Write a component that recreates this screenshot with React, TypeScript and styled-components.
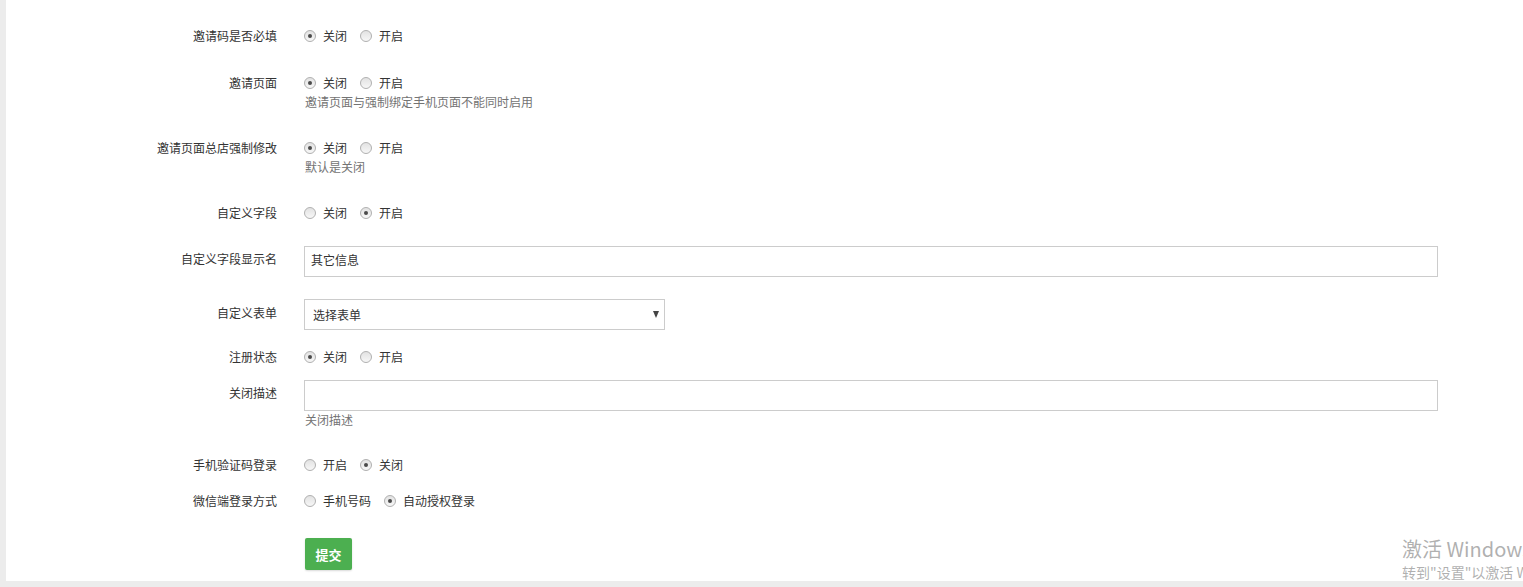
import React from "react";
import styled, { createGlobalStyle } from "styled-components";

const Global = createGlobalStyle`
  html, body { margin: 0; padding: 0; overflow: hidden; }
  body {
    background: #ececec;
    font-family: "Noto Sans CJK SC", "Noto Sans", "Liberation Sans", sans-serif;
    font-size: 12px;
    color: #333;
  }
  * { box-sizing: border-box; }
`;

const Panel = styled.div`
  position: relative;
  margin-left: 6px;
  width: 1517px;
  height: 581px;
  background: #fff;
  padding-top: 26px;
  overflow: hidden;
`;

const Row = styled.div<{ $mt?: number }>`
  display: grid;
  grid-template-columns: 271px 1134px;
  column-gap: 27px;
  margin-top: ${(p) => p.$mt ?? 0}px;
`;

const Label = styled.div<{ $pt?: number }>`
  text-align: right;
  line-height: 20px;
  padding-top: ${(p) => p.$pt ?? 0}px;
  color: #333;
  white-space: nowrap;
`;

const Control = styled.div`
  display: flex;
  flex-direction: column;
  align-items: flex-start;
`;

const RadioGroup = styled.div`
  display: flex;
  align-items: center;
  height: 20px;
  gap: 13px;
`;

const RadioOption = styled.label`
  display: flex;
  align-items: center;
  gap: 7px;
  line-height: 20px;
  color: #333;
`;

const RadioDot = styled.span<{ $on?: boolean }>`
  position: relative;
  width: 12px;
  height: 12px;
  border-radius: 50%;
  border: 1px solid #b0b0b0;
  background: linear-gradient(#e2e2e2, #f7f7f7);
  &::after {
    content: "";
    display: ${(p) => (p.$on ? "block" : "none")};
    position: absolute;
    left: 3px;
    top: 3px;
    width: 4px;
    height: 4px;
    border-radius: 50%;
    background: #4a4a4a;
  }
`;

const Help = styled.div`
  line-height: 17px;
  color: #737373;
  padding-left: 1px;
`;

const TextInput = styled.input`
  width: 1134px;
  height: 31px;
  border: 1px solid #ccc;
  border-radius: 0;
  padding: 0 6px 4px;
  font: inherit;
  font-size: 12px;
  color: #333;
  outline: none;
  background: #fff;
`;

const SelectWrap = styled.div`
  position: relative;
  width: 361px;
  height: 31px;
`;

const Select = styled.select`
  width: 100%;
  height: 100%;
  appearance: none;
  -webkit-appearance: none;
  border: 1px solid #ccc;
  border-radius: 0;
  background: #fff;
  padding: 0 8px 1px;
  font: inherit;
  font-size: 12px;
  color: #333;
  outline: none;
`;

const Arrow = styled.span`
  position: absolute;
  right: 6px;
  top: 12px;
  width: 0;
  height: 0;
  border-left: 3.5px solid transparent;
  border-right: 3.5px solid transparent;
  border-top: 7px solid #444;
  pointer-events: none;
`;

const Button = styled.button`
  margin-left: 1px;
  width: 47px;
  height: 32px;
  border: none;
  border-radius: 2px;
  background: #4caf50;
  color: #fff;
  font: inherit;
  font-size: 13px;
  font-weight: bold;
  box-shadow: 0 1px 2px rgba(0, 0, 0, 0.15);
  cursor: pointer;
`;

const Watermark = styled.div`
  position: absolute;
  left: 1396px;
  top: 536px;
  white-space: nowrap;
  color: rgba(150, 150, 150, 0.75);
  pointer-events: none;
`;

const WmTitle = styled.div`
  font-family: "Noto Sans CJK SC", "Noto Sans", sans-serif;
  font-size: 20px;
  line-height: 26px;
`;

const WmSub = styled.div`
  font-size: 14px;
  line-height: 20px;
`;

type Opt = { text: string; on?: boolean };

const Radios = ({ options }: { options: Opt[] }) => (
  <RadioGroup>
    {options.map((o) => (
      <RadioOption key={o.text}>
        <RadioDot $on={o.on} />
        {o.text}
      </RadioOption>
    ))}
  </RadioGroup>
);

const offOn: Opt[] = [{ text: "关闭", on: true }, { text: "开启" }];

export default function App() {
  return (
    <>
      <Global />
      <Panel>
        <Row>
          <Label>邀请码是否必填</Label>
          <Control>
            <Radios options={offOn} />
          </Control>
        </Row>
        <Row $mt={27}>
          <Label>邀请页面</Label>
          <Control>
            <Radios options={offOn} />
            <Help>邀请页面与强制绑定手机页面不能同时启用</Help>
          </Control>
        </Row>
        <Row $mt={28}>
          <Label>邀请页面总店强制修改</Label>
          <Control>
            <Radios options={offOn} />
            <Help>默认是关闭</Help>
          </Control>
        </Row>
        <Row $mt={28}>
          <Label>自定义字段</Label>
          <Control>
            <Radios options={[{ text: "关闭" }, { text: "开启", on: true }]} />
          </Control>
        </Row>
        <Row $mt={23}>
          <Label $pt={3}>自定义字段显示名</Label>
          <Control>
            <TextInput defaultValue="其它信息" />
          </Control>
        </Row>
        <Row $mt={22}>
          <Label $pt={4}>自定义表单</Label>
          <Control>
            <SelectWrap>
              <Select defaultValue="">
                <option value="">选择表单</option>
              </Select>
              <Arrow />
            </SelectWrap>
          </Control>
        </Row>
        <Row $mt={17}>
          <Label>注册状态</Label>
          <Control>
            <Radios options={offOn} />
          </Control>
        </Row>
        <Row $mt={13}>
          <Label $pt={3}>关闭描述</Label>
          <Control>
            <TextInput />
            <Help>关闭描述</Help>
          </Control>
        </Row>
        <Row $mt={27}>
          <Label>手机验证码登录</Label>
          <Control>
            <Radios options={[{ text: "开启" }, { text: "关闭", on: true }]} />
          </Control>
        </Row>
        <Row $mt={16}>
          <Label>微信端登录方式</Label>
          <Control>
            <Radios options={[{ text: "手机号码" }, { text: "自动授权登录", on: true }]} />
          </Control>
        </Row>
        <Row $mt={27}>
          <Label />
          <Control>
            <Button type="button">提交</Button>
          </Control>
        </Row>
        <Watermark>
          <WmTitle>激活 Windows</WmTitle>
          <WmSub>转到"设置"以激活 Windows。</WmSub>
        </Watermark>
      </Panel>
    </>
  );
}
